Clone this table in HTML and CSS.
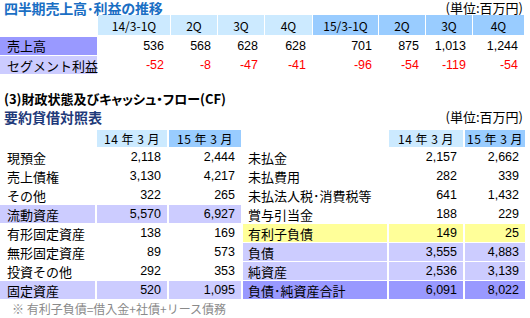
FILE: index.html
```html
<!DOCTYPE html>
<html lang="ja">
<head>
<meta charset="utf-8">
<link rel="stylesheet" href="styles.css">
</head>
<body>
<div class="page">
  <div class="head-top">
    <div class="title-blue">四半期売上高･利益の推移</div>
    <div class="unit">(単位:百万円)</div>
  </div>
  <div class="qtable">
    <div></div>
    <div class="h h1">14/3-1Q</div>
    <div class="h h1">2Q</div>
    <div class="h h1">3Q</div>
    <div class="h h1">4Q</div>
    <div class="h h2">15/3-1Q</div>
    <div class="h h2">2Q</div>
    <div class="h h2">3Q</div>
    <div class="h h2">4Q</div>

    <div class="lbl dark">売上高</div>
    <div class="num">536</div>
    <div class="num">568</div>
    <div class="num">628</div>
    <div class="num">628</div>
    <div class="num">701</div>
    <div class="num">875</div>
    <div class="num">1,013</div>
    <div class="num">1,244</div>

    <div class="lbl light">セグメント利益</div>
    <div class="num neg">-52</div>
    <div class="num neg">-8</div>
    <div class="num neg">-47</div>
    <div class="num neg">-41</div>
    <div class="num neg">-96</div>
    <div class="num neg">-54</div>
    <div class="num neg">-119</div>
    <div class="num neg">-54</div>
  </div>

  <div class="title-black">(3)財政状態及びキャッシュ・フロー(CF)</div>
  <div class="head-bs">
    <div class="title-navy">要約貸借対照表</div>
    <div class="unit">(単位:百万円)</div>
  </div>

  <div class="bstable">
    <div></div>
    <div class="h h1">14 年 3 月</div>
    <div class="h h2">15 年 3 月</div>
    <div></div>
    <div class="h h1">14 年 3 月</div>
    <div class="h h2">15 年 3 月</div>

    <div class="lbl">現預金</div><div class="num">2,118</div><div class="num">2,444</div>
    <div class="lbl r">未払金</div><div class="num">2,157</div><div class="num">2,662</div>

    <div class="lbl">売上債権</div><div class="num">3,130</div><div class="num">4,217</div>
    <div class="lbl r">未払費用</div><div class="num">282</div><div class="num">339</div>

    <div class="lbl">その他</div><div class="num">322</div><div class="num">265</div>
    <div class="lbl r">未払法人税･消費税等</div><div class="num">641</div><div class="num">1,432</div>

    <div class="lbl light">流動資産</div><div class="num light">5,570</div><div class="num light">6,927</div>
    <div class="lbl r">賞与引当金</div><div class="num">188</div><div class="num">229</div>

    <div class="lbl">有形固定資産</div><div class="num">138</div><div class="num">169</div>
    <div class="lbl r yellow">有利子負債</div><div class="num yellow">149</div><div class="num yellow">25</div>

    <div class="lbl">無形固定資産</div><div class="num">89</div><div class="num">573</div>
    <div class="lbl r light">負債</div><div class="num light">3,555</div><div class="num light">4,883</div>

    <div class="lbl">投資その他</div><div class="num">292</div><div class="num">353</div>
    <div class="lbl r light">純資産</div><div class="num light">2,536</div><div class="num light">3,139</div>

    <div class="lbl light">固定資産</div><div class="num light">520</div><div class="num light">1,095</div>
    <div class="lbl r dark">負債･純資産合計</div><div class="num dark">6,091</div><div class="num dark">8,022</div>
  </div>

  <div class="note">※ 有利子負債=借入金+社債+リース債務</div>
</div>
</body>
</html>
```

FILE: styles.css
```css
html, body {
  margin: 0;
  padding: 0;
  background: #ffffff;
}
body {
  font-family: "Noto Sans CJK JP", "Noto Sans", sans-serif;
  font-size: 12px;
  color: #000;
  width: 530px;
}
.page {
  width: 525px;
}
.head-top {
  display: flex;
  justify-content: space-between;
  align-items: flex-start;
  height: 15px;
  padding-top: 1px;
  box-sizing: border-box;
}
.title-blue {
  color: #1a6fc4;
  font-weight: bold;
  font-size: 14px;
  line-height: 14px;
  padding-left: 4px;
  letter-spacing: -0.2px;
}
.unit {
  font-size: 13px;
  line-height: 14px;
  padding-right: 2px;
}
.qtable {
  display: grid;
  grid-template-columns: 97px 72px 46px 46px 47px 65px 46px 46px 51px;
  grid-template-rows: 20px 18px 18px;
  column-gap: 1px;
  row-gap: 1.5px;
}
.qtable > div,
.bstable > div {
  display: flex;
  align-items: center;
  white-space: nowrap;
}
.h {
  justify-content: center;
  font-size: 12px;
}
.h1 { background: #cceaff; }
.h2 { background: #99ccff; }
.lbl {
  padding-left: 7px;
  font-size: 13px;
}
.lbl.r {
  padding-left: 5px;
}
.dark { background: #9999ff; }
.light { background: #ccccff; }
.yellow { background: #ffff99; }
.num {
  justify-content: flex-end;
  padding-right: 6px;
  font-family: "Liberation Sans Narrow", "Liberation Sans", sans-serif;
  font-size: 12.5px;
}
.neg { color: #ff0000; }
.title-black {
  margin-top: 17px;
  font-weight: bold;
  font-size: 13px;
  line-height: 16px;
  padding-left: 4px;
  font-feature-settings: "palt";
}
.head-bs {
  display: flex;
  justify-content: space-between;
  align-items: center;
  margin-top: 2px;
  height: 16px;
}
.title-navy {
  color: #1f3a7a;
  font-weight: bold;
  font-size: 14px;
  line-height: 16px;
  padding-left: 4px;
}
.head-bs .unit {
  line-height: 16px;
}
.bstable {
  margin-top: 5px;
  display: grid;
  grid-template-columns: 95px 70px 72px 144px 74px 60px;
  grid-template-rows: 17px repeat(8, 18px);
  column-gap: 2px;
  row-gap: 1px;
}
.bstable .h {
  letter-spacing: 0.5px;
}
.note {
  color: #8a8a8a;
  font-size: 12px;
  line-height: 15px;
  padding-left: 12px;
  margin-top: 2px;
}
```
